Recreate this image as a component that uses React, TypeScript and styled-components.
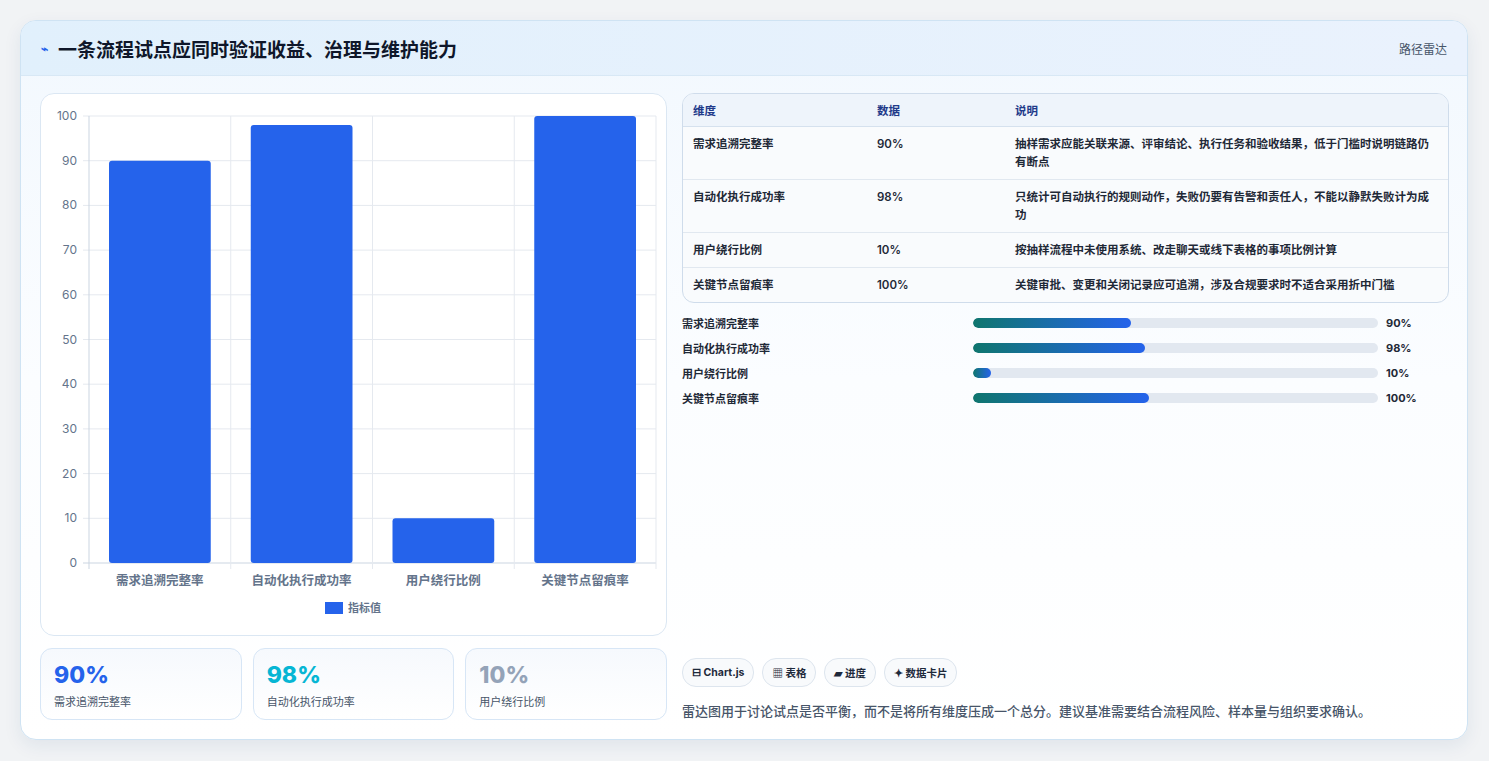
import React from "react";
import styled, { createGlobalStyle } from "styled-components";

const Global = createGlobalStyle`
  body { margin:0; background:#f1f3f5; font-family: Inter, "Noto Sans CJK SC", sans-serif; }
`;
const Page = styled.div`padding:20px 21px 21px 20px; height:761px; box-sizing:border-box;`;
const Card = styled.div`
  background:linear-gradient(180deg,#f2f8fe,#fbfdff 50%,#ffffff); border:1px solid #cfe3f3; border-radius:16px;
  box-shadow:0 6px 18px rgba(30,60,120,.08); overflow:hidden; height:720px; box-sizing:border-box;
`;
const Header = styled.div`
  height:55px; box-sizing:border-box; display:flex; align-items:center; justify-content:space-between;
  padding:0 20px; background:linear-gradient(90deg,#e1f0fc,#eaf2fd); border-bottom:1px solid #d8e8f5;
`;
const Title = styled.h1`margin:0; font-size:19px; font-weight:700; color:#0f172a; display:flex; align-items:center; gap:10px;`;
const Tag = styled.span`font-size:12px; color:#475569;`;
const Body = styled.div`display:grid; grid-template-columns:627px 767px; gap:15px; padding:17px 19px 0 19px;`;
const Col = styled.div`display:flex; flex-direction:column;`;
const ChartBox = styled.div`background:#fff; border:1px solid #dbe7f3; border-radius:14px; height:543px; box-sizing:border-box;`;
const Stats = styled.div`display:grid; grid-template-columns:repeat(3,1fr); gap:11px; margin-top:12px;`;
const Stat = styled.div`height:72px; box-sizing:border-box; border:1px solid #d7e6f6; border-radius:12px; background:linear-gradient(180deg,#f6f9fd,#fff); padding:12px 13px;`;
const StatVal = styled.div<{ c: string }>`font-size:23px; font-weight:800; color:${p => p.c}; line-height:28px;`;
const StatLbl = styled.div`font-size:11px; color:#475569; margin-top:4px;`;
const Table = styled.table`width:100%; border-collapse:separate; border-spacing:0; border:1px solid #cfdceb; border-radius:12px; overflow:hidden; font-size:11.5px; font-weight:600; color:#1f2937; background:#f9fbfd;`;
const Th = styled.th`text-align:left; background:#eef4fb; color:#1e3a8a; height:32px; padding:0 10px; border-bottom:1px solid #d5e1ee;`;
const Td = styled.td<{ last?: boolean }>`padding:8px 14px 8px 10px; line-height:18px; height:18px; vertical-align:top; border-bottom:${p => p.last ? "none" : "1px solid #e1e8f0"};`;
const Bars = styled.div`display:flex; flex-direction:column; gap:7px; margin-top:11px;`;
const BarRow = styled.div`display:grid; grid-template-columns:291px 405px 1fr; gap:0; align-items:center; height:18px; font-size:11px; font-weight:600; color:#1f2937;`;
const Track = styled.div`height:10px; border-radius:5px; background:#e2e8f0; overflow:hidden;`;
const Fill = styled.div`height:100%; border-radius:5px; background:linear-gradient(90deg,#0f766e,#2563eb);`;
const Val = styled.span`padding-left:8px; font-weight:700;`;
const Spacer = styled.div`flex:1;`;
const Pills = styled.div`display:flex; gap:8px; margin-bottom:14px;`;
const Pill = styled.span`font-size:10.5px; font-weight:700; color:#1e293b; border:1px solid #dde5ee; border-radius:14px; padding:0 9px; height:27px; display:flex; align-items:center; background:#f8fafc;`;
const Note = styled.p`margin:0; font-size:13px; color:#475569; font-weight:500;`;

const cats = ["需求追溯完整率", "自动化执行成功率", "用户绕行比例", "关键节点留痕率"];
const vals = [90, 98, 10, 100];
const rows = [
  ["需求追溯完整率", "90%", "抽样需求应能关联来源、评审结论、执行任务和验收结果，低于门槛时说明链路仍有断点"],
  ["自动化执行成功率", "98%", "只统计可自动执行的规则动作，失败仍要有告警和责任人，不能以静默失败计为成功"],
  ["用户绕行比例", "10%", "按抽样流程中未使用系统、改走聊天或线下表格的事项比例计算"],
  ["关键节点留痕率", "100%", "关键审批、变更和关闭记录应可追溯，涉及合规要求时不适合采用折中门槛"],
];
const fills = [39, 42.5, 4.4, 43.5];

function Chart() {
  const L = 48, R = 615, T = 22, B = 469, w = (R - L) / 4;
  const y = (v: number) => B - (v / 100) * (B - T);
  return (
    <svg width="625" height="541" style={{ display: "block" }} fontFamily='Inter, "Noto Sans CJK SC", sans-serif'>
      {Array.from({ length: 11 }, (_, i) => i * 10).map(v => (
        <g key={v}>
          <line x1={L - 6} x2={R} y1={y(v)} y2={y(v)} stroke={v === 0 ? "#cbd5e1" : "#e5e9ef"} />
          <text x={36} y={y(v) + 4} fontSize="12" fill="#64748b" textAnchor="end">{v}</text>
        </g>
      ))}
      {[0, 1, 2, 3, 4].map(i => <line key={i} x1={L + i * w} x2={L + i * w} y1={T} y2={B + 6} stroke={i === 0 ? "#cbd5e1" : "#e5e9ef"} />)}
      {vals.map((v, i) => (
        <g key={i}>
          <rect x={L + i * w + 20} y={y(v)} width={w - 40} height={B - y(v)} rx="3" fill="#2563eb" />
          <text x={L + i * w + w / 2} y={491} fontSize="12.5" fontWeight="600" fill="#64748b" textAnchor="middle">{cats[i]}</text>
        </g>
      ))}
      <rect x={284} y={508} width={18} height={12} fill="#2563eb" />
      <text x={307} y={518} fontSize="11" fontWeight="600" fill="#64748b">指标值</text>
    </svg>
  );
}

export default function App() {
  return (
    <>
      <Global />
      <Page>
        <Card>
          <Header>
            <Title><span style={{ color: "#2563eb", fontSize: 12 }}>⌁</span>一条流程试点应同时验证收益、治理与维护能力</Title>
            <Tag>路径雷达</Tag>
          </Header>
          <Body>
            <Col>
              <ChartBox><Chart /></ChartBox>
              <Stats>
                <Stat><StatVal c="#2563eb">90%</StatVal><StatLbl>需求追溯完整率</StatLbl></Stat>
                <Stat><StatVal c="#06b6d4">98%</StatVal><StatLbl>自动化执行成功率</StatLbl></Stat>
                <Stat><StatVal c="#94a3b8">10%</StatVal><StatLbl>用户绕行比例</StatLbl></Stat>
              </Stats>
            </Col>
            <Col>
              <Table>
                <thead><tr><Th style={{ width: 164 }}>维度</Th><Th style={{ width: 118 }}>数据</Th><Th>说明</Th></tr></thead>
                <tbody>
                  {rows.map((r, i) => (
                    <tr key={i}>{r.map((c, j) => <Td key={j} last={i === 3}>{c}</Td>)}</tr>
                  ))}
                </tbody>
              </Table>
              <Bars>
                {rows.map((r, i) => (
                  <BarRow key={i}><span>{r[0]}</span><Track><Fill style={{ width: fills[i] + "%" }} /></Track><Val>{r[1]}</Val></BarRow>
                ))}
              </Bars>
              <Spacer />
              <Pills>
                <Pill>⊟ Chart.js</Pill><Pill>▦ 表格</Pill><Pill>▰ 进度</Pill><Pill>✦ 数据卡片</Pill>
              </Pills>
              <Note>雷达图用于讨论试点是否平衡，而不是将所有维度压成一个总分。建议基准需要结合流程风险、样本量与组织要求确认。</Note>
            </Col>
          </Body>
        </Card>
      </Page>
    </>
  );
}
